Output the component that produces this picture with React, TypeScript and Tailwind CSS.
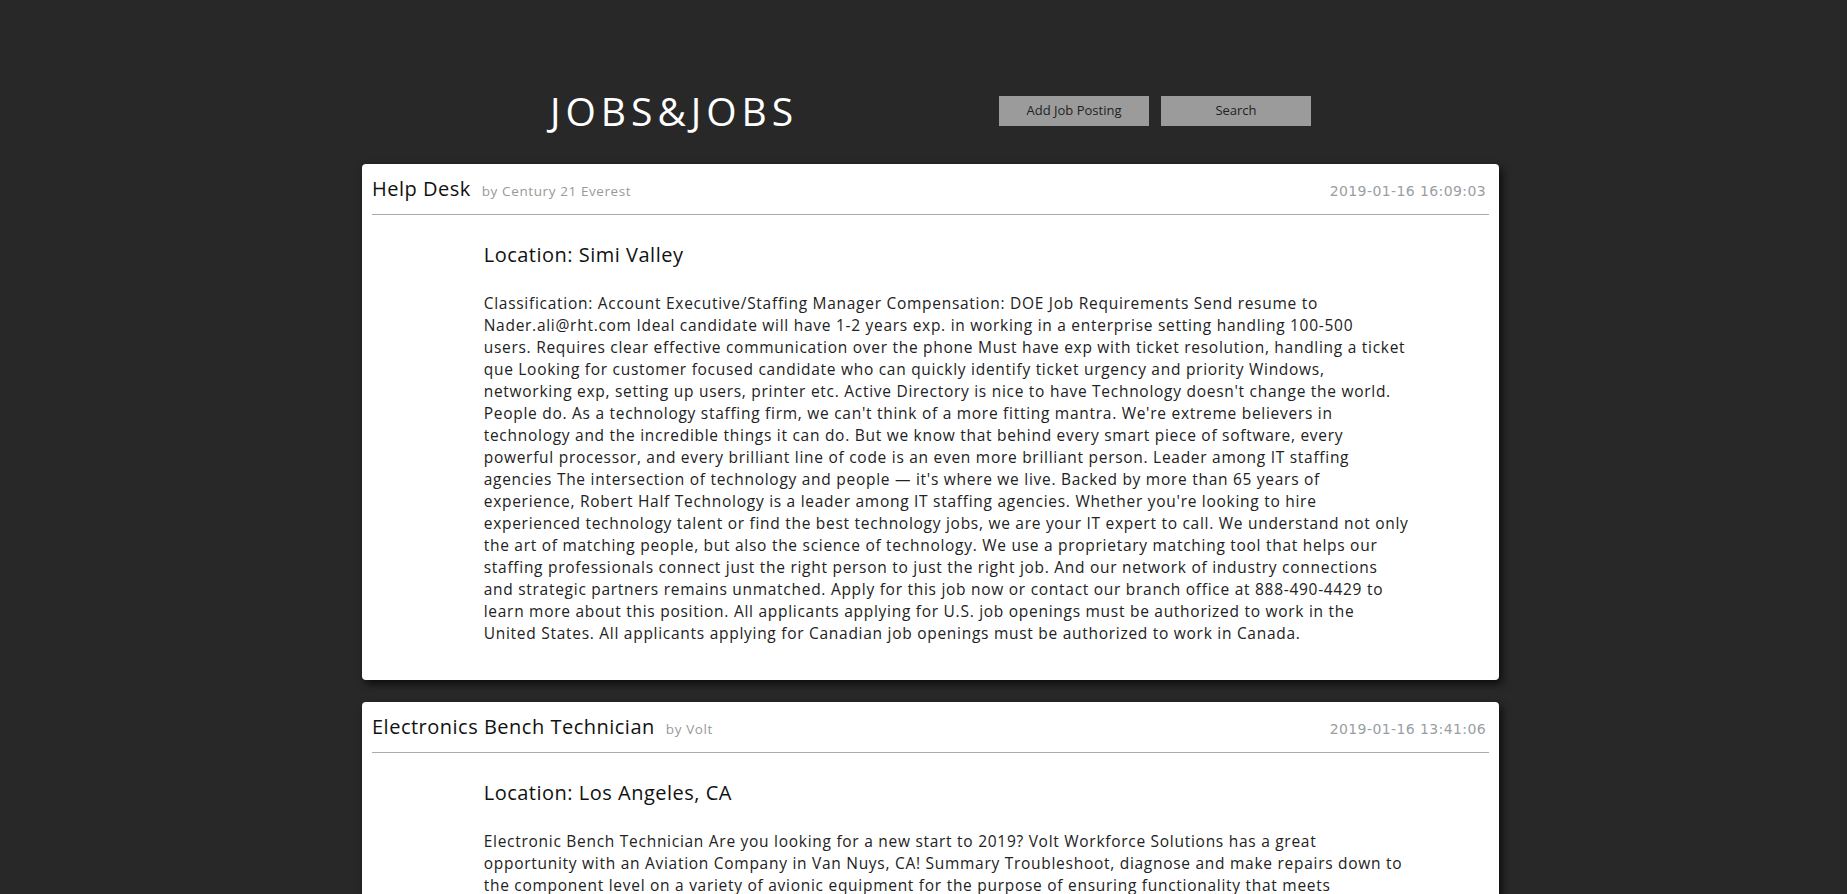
import React from 'react';

type Job = {
  title: string;
  company: string;
  date: string;
  location: string;
  lines: string[];
};

const jobs: Job[] = [
  {
    title: 'Help Desk',
    company: 'Century 21 Everest',
    date: '2019-01-16 16:09:03',
    location: 'Simi Valley',
    lines: [
      'Classification: Account Executive/Staffing Manager Compensation: DOE Job Requirements Send resume to',
      'Nader.ali@rht.com Ideal candidate will have 1-2 years exp. in working in a enterprise setting handling 100-500',
      'users. Requires clear effective communication over the phone Must have exp with ticket resolution, handling a ticket',
      'que Looking for customer focused candidate who can quickly identify ticket urgency and priority Windows,',
      "networking exp, setting up users, printer etc. Active Directory is nice to have Technology doesn't change the world.",
      "People do. As a technology staffing firm, we can't think of a more fitting mantra. We're extreme believers in",
      'technology and the incredible things it can do. But we know that behind every smart piece of software, every',
      'powerful processor, and every brilliant line of code is an even more brilliant person. Leader among IT staffing',
      "agencies The intersection of technology and people \u2014 it's where we live. Backed by more than 65 years of",
      "experience, Robert Half Technology is a leader among IT staffing agencies. Whether you're looking to hire",
      'experienced technology talent or find the best technology jobs, we are your IT expert to call. We understand not only',
      'the art of matching people, but also the science of technology. We use a proprietary matching tool that helps our',
      'staffing professionals connect just the right person to just the right job. And our network of industry connections',
      'and strategic partners remains unmatched. Apply for this job now or contact our branch office at 888-490-4429 to',
      'learn more about this position. All applicants applying for U.S. job openings must be authorized to work in the',
      'United States. All applicants applying for Canadian job openings must be authorized to work in Canada.',
    ],
  },
  {
    title: 'Electronics Bench Technician',
    company: 'Volt',
    date: '2019-01-16 13:41:06',
    location: 'Los Angeles, CA',
    lines: [
      'Electronic Bench Technician Are you looking for a new start to 2019? Volt Workforce Solutions has a great',
      'opportunity with an Aviation Company in Van Nuys, CA! Summary Troubleshoot, diagnose and make repairs down to',
      'the component level on a variety of avionic equipment for the purpose of ensuring functionality that meets',
      'customer and regulatory requirements. Essential Duties and Responsibilities Test, troubleshoot and repair avionic',
      'units to the component level using schematics, test equipment and written procedures. Document all work',
      'performed and parts used on repair orders. Maintain a clean and organized work area.',
    ],
  },
];

const JobCard: React.FC<{ job: Job }> = ({ job }) => (
  <div className="bg-white rounded-[4px] shadow-[3px_4px_8px_rgba(0,0,0,0.7)] px-[10px] pt-[10px] pb-[36px]">
    <div className="flex items-baseline justify-between border-b border-[#ababab] pb-[10px]">
      <div className="flex items-baseline">
        <span className="text-[20px] tracking-[0.5px] text-[#111]">{job.title}</span>
        <span className="ml-[11px] text-[13.5px] tracking-[0.6px] text-[#999]">by {job.company}</span>
      </div>
      <span className="pr-[3px] text-[14px] tracking-[0.4px] text-[#9a9ea3] font-['DejaVu_Sans',sans-serif]">{job.date}</span>
    </div>
    <div className="w-[80%] mx-auto pt-[25px]">
      <h2 className="text-[20px] tracking-[0.5px] text-[#111]">Location: {job.location}</h2>
      <p className="mt-[22px] text-[15.5px] leading-[22px] tracking-[0.72px] text-[#222]">
        {job.lines.map((line, i) => (
          <span key={i} className="block whitespace-nowrap">
            {line}
          </span>
        ))}
      </p>
    </div>
  </div>
);

export default function App() {
  return (
    <div className="min-h-screen bg-[#282828] font-['Open_Sans',sans-serif] overflow-hidden">
      <div className="w-[1137px] ml-[362px] pt-[88px]">
        <header className="flex items-center justify-between px-[188px] h-[45px]">
          <h1 className="text-[39px] tracking-[5px] text-white leading-none">JOBS&amp;JOBS</h1>
          <div className="flex gap-[12px]">
            <button className="w-[150px] h-[30px] bg-[#9b9b9b] text-[13px] text-[#222]">Add Job Posting</button>
            <button className="w-[150px] h-[30px] bg-[#9b9b9b] text-[13px] text-[#222]">Search</button>
          </div>
        </header>
        <div className="mt-[31px] flex flex-col gap-[22px]">
          {jobs.map((job) => (
            <JobCard key={job.title} job={job} />
          ))}
        </div>
      </div>
    </div>
  );
}
